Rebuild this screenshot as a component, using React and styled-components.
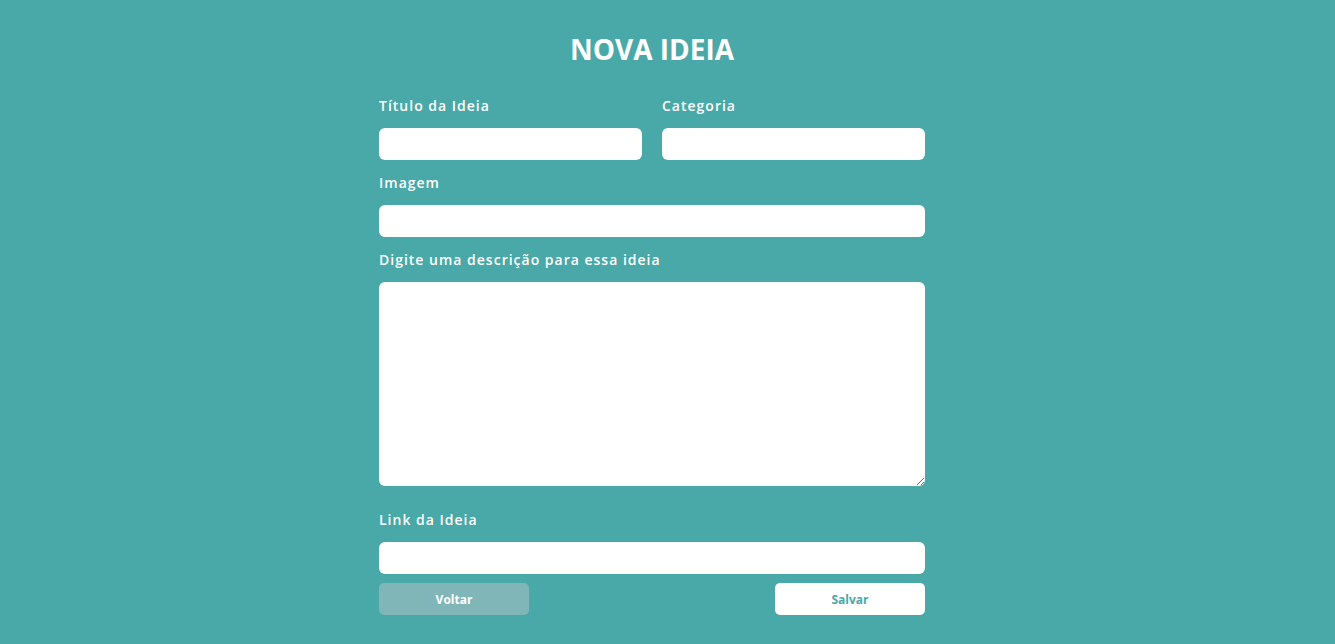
import React from "react"
import styled, { createGlobalStyle } from "styled-components"

const colors = {
  bg: "#49a8a8",
  muted: "#80b6b7",
  white: "#ffffff",
}

const GlobalStyle = createGlobalStyle`
  body {
    margin: 0;
    background: ${colors.bg};
    font-family: "Open Sans", "Noto Sans", sans-serif;
  }
`

const Page = styled.main`
  min-height: 644px;
  padding: 30px 31px 0 0;
  box-sizing: border-box;
`

const Title = styled.h1`
  margin: 0 0 28px;
  text-align: center;
  color: ${colors.white};
  font-size: 28px;
  line-height: 38px;
  font-weight: 700;
`

const Form = styled.form`
  width: 546px;
  margin: 0 auto;
  display: flex;
  flex-direction: column;
`

const Row = styled.div`
  display: grid;
  grid-template-columns: 1fr 1fr;
  column-gap: 20px;
`

const Field = styled.div`
  display: flex;
  flex-direction: column;
  margin-bottom: ${(p) => p.$gap || 13}px;
`

const Label = styled.label`
  color: ${colors.white};
  font-size: 14px;
  line-height: 20px;
  font-weight: 600;
  letter-spacing: 1px;
  margin-bottom: 12px;
`

const Input = styled.input`
  height: 32px;
  box-sizing: border-box;
  border: none;
  border-radius: 6px;
  background: ${colors.white};
  outline: none;
  padding: 0 10px;
`

const TextArea = styled.textarea`
  height: 204px;
  box-sizing: border-box;
  border: none;
  border-radius: 6px;
  background: ${colors.white};
  outline: none;
  padding: 10px;
  resize: vertical;
`

const Actions = styled.div`
  display: flex;
  justify-content: space-between;
  margin-top: -4px;
`

const Button = styled.button`
  width: 150px;
  height: 32px;
  border: none;
  border-radius: 5px;
  font-family: "Open Sans", sans-serif;
  font-size: 12px;
  font-weight: 700;
  background: ${(p) => (p.$primary ? colors.white : colors.muted)};
  color: ${(p) => (p.$primary ? colors.bg : colors.white)};
  cursor: pointer;
`

const App = () => {
  return (
    <Page>
      <GlobalStyle />
      <Title>NOVA IDEIA</Title>
      <Form onSubmit={(e) => e.preventDefault()}>
        <Row>
          <Field>
            <Label>Título da Ideia</Label>
            <Input />
          </Field>
          <Field>
            <Label>Categoria</Label>
            <Input />
          </Field>
        </Row>
        <Field>
          <Label>Imagem</Label>
          <Input />
        </Field>
        <Field $gap={24}>
          <Label>Digite uma descrição para essa ideia</Label>
          <TextArea />
        </Field>
        <Field>
          <Label>Link da Ideia</Label>
          <Input />
        </Field>
        <Actions>
          <Button type="button">Voltar</Button>
          <Button type="submit" $primary>Salvar</Button>
        </Actions>
      </Form>
    </Page>
  )
}

export default App
